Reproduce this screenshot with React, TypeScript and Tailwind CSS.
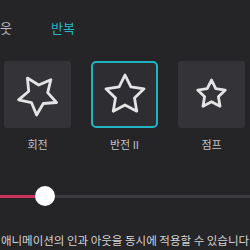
import React from "react";

const FONT = { fontFamily: '"Noto Sans CJK KR", "Noto Sans", sans-serif' };

function Star({ r, rotate = 0 }: { r: number; rotate?: number }) {
  // five-point outline star, rounded joins
  const size = r * 2 + 6;
  const c = size / 2;
  const pts: string[] = [];
  for (let i = 0; i < 10; i++) {
    const rad = i % 2 === 0 ? r : r * 0.5;
    const a = ((-90 + i * 36 + rotate) * Math.PI) / 180;
    pts.push(`${(c + rad * Math.cos(a)).toFixed(2)},${(c + rad * Math.sin(a)).toFixed(2)}`);
  }
  return (
    <svg width={size} height={size} viewBox={`0 0 ${size} ${size}`}>
      <polygon
        points={pts.join(" ")}
        fill="none"
        stroke="#e4e4e4"
        strokeWidth={2.8}
        strokeLinejoin="round"
      />
    </svg>
  );
}

const effects = [
  { label: "회전", r: 20, rotate: -32, selected: false },
  { label: "반전 II", r: 20, rotate: 0, selected: true },
  { label: "점프", r: 14.5, rotate: 0, selected: false },
];

export default function App() {
  return (
    <div
      className="w-[250px] h-[250px] overflow-hidden bg-[#252427] text-[#c9c9cb]"
      style={FONT}
    >
      {/* tabs */}
      <div className="flex mt-[18px] ml-[-12px] gap-[39px] text-[13px] leading-[20px] whitespace-nowrap">
        <span className="text-[#bdbdbf]">아웃</span>
        <span className="text-[#25b6c4]">반복</span>
      </div>

      {/* effect cards */}
      <div className="flex pl-[4px] gap-[20px] mt-[23px]">
        {effects.map((e) => (
          <div key={e.label} className="flex flex-col items-center w-[67px]">
            <div
              className={
                e.selected
                  ? "w-[67px] h-[67px] rounded-[5px] border-2 border-[#22b3c2] bg-[#2e2d31] flex items-center justify-center"
                  : "w-[67px] h-[67px] rounded-[3px] bg-[#343337] flex items-center justify-center"
              }
            >
              <Star r={e.r} rotate={e.rotate} />
            </div>
            <span className="mt-[8px] text-[11px] leading-[16px] text-[#c4c4c6] whitespace-nowrap">
              {e.label}
            </span>
          </div>
        ))}
      </div>

      {/* slider */}
      <div className="relative h-[20px] mt-[34px] flex items-center">
        <div className="flex w-full h-[3px]">
          <div className="w-[40px] h-full bg-[#c8315a]" />
          <div className="flex-1 h-full bg-[#3c3b3f]" />
        </div>
        <div className="absolute left-[35px] top-0 w-[20px] h-[20px] rounded-full bg-white" />
      </div>

      {/* description */}
      <div className="mt-[26px] flex justify-center">
        <p className="text-[11.5px] leading-[16px] whitespace-nowrap text-[#d4d4d6] shrink-0">
          애니메이션의 인과 아웃을 동시에 적용할 수 있습니다
        </p>
      </div>
    </div>
  );
}
